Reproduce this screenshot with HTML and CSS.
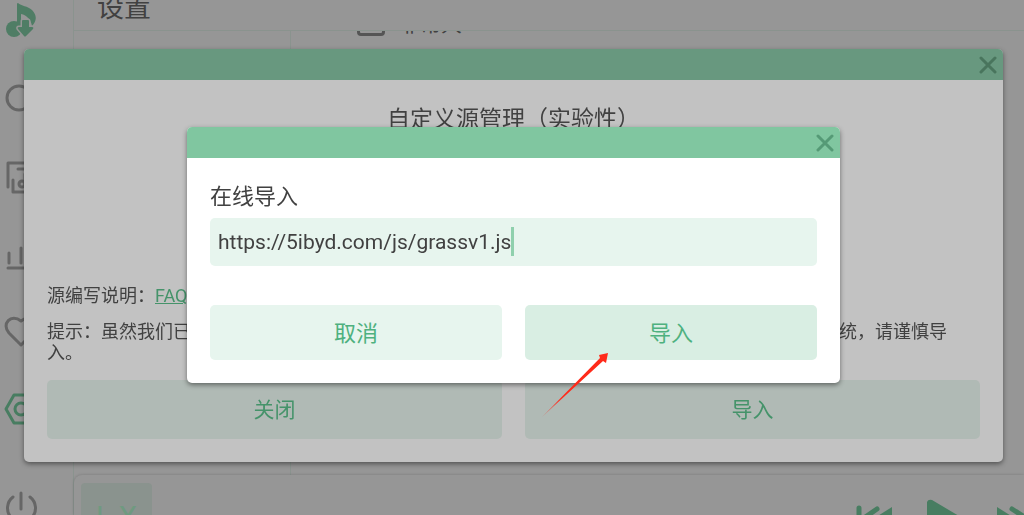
FILE: index.html
```html
<!DOCTYPE html>
<html lang="zh-CN">
<head>
    <meta charset="UTF-8">
    <meta name="viewport" content="width=device-width, initial-scale=1.0">
    <title>设置</title>
    <link rel="stylesheet" href="styles.css">
</head>
<body>
    <div class="app">
        <nav class="sidebar">
            <svg class="logo" viewBox="0 0 32 34">
                <circle cx="9" cy="26" r="8"/>
                <path d="M12 1q0-1 1-1c3 3 10 3 14 7 5 5 5 11 0 16-1-6-5-11-11-12v15h-4z"/>
                <path class="arrow" d="M17 18q0-1 1-1h5q1 0 1 1v6h3q2 0 1 2l-7 7q-1 1-2 0l-6-7q-1-2 1-2h3z"/>
            </svg>
            <svg class="icon" viewBox="0 0 32 32"><circle cx="14" cy="15" r="12"/><path d="M23 24l6 6"/></svg>
            <svg class="icon" viewBox="0 0 32 32"><path d="M3 26V2h25M8 19v12h22V8H13"/><circle cx="17" cy="23" r="3"/><path d="M20 23V13"/></svg>
            <svg class="icon" viewBox="0 0 32 32"><path d="M3 29h27M4 14v10M16 9v15M27 4v20"/></svg>
            <svg class="icon" viewBox="0 0 32 32"><path d="M16 28L4 16C-4 7 6-4 16 4c10-8 20 3 12 12z"/></svg>
            <svg class="icon active" viewBox="0 0 32 32"><path d="M9 0h15l8 14-8 14H9L1 14z"/><circle cx="16" cy="14" r="6"/></svg>
            <svg class="icon power" viewBox="0 0 32 32"><path d="M16 2v16M8 6a14 14 0 1 0 17 0"/></svg>
        </nav>
        <main class="main">
            <header class="title-bar">设置</header>
            <div class="settings">
                <div class="settings-menu"></div>
                <div class="settings-list">
                    <label class="option"><input type="checkbox">非常大</label>
                </div>
            </div>
            <footer class="player">
                <div class="cover">L X</div>
                <div class="controls">
                    <button type="button" aria-label="上一首"><svg width="40" height="28" viewBox="0 0 40 28"><path class="line" d="M4 3v22M22 4L9 13l13 11"/><path d="M37 2v24L18 14z"/></svg></button>
                    <button type="button" aria-label="播放"><svg width="40" height="40" viewBox="0 0 40 40"><path d="M2 3q1-3 5-2l27 16q4 3 0 6L7 39q-4 1-5-2z"/></svg></button>
                    <button type="button" aria-label="下一首"><svg width="40" height="28" viewBox="0 0 40 28"><path class="line" d="M36 3v22M17 4l14 9-14 11"/><path d="M2 2v24l19-12z"/></svg></button>
                </div>
            </footer>
        </main>
    </div>

    <div class="overlay">
        <section class="dialog source-dialog">
            <header class="dialog-header">
                <button type="button" class="close" aria-label="关闭"><svg width="18" height="18" viewBox="0 0 18 18"><path d="M2 2l14 14M16 2L2 16"/></svg></button>
            </header>
            <div class="dialog-body">
                <h1>自定义源管理（实验性）</h1>
                <p>源编写说明：<a href="#">FAQ</a></p>
                <p>提示：虽然我们已经尽可能隔离了脚本的运行环境，但导入包含恶意行为的脚本仍可能会影响你的系统，请谨慎导入。</p>
                <div class="actions">
                    <button type="button">关闭</button>
                    <button type="button">导入</button>
                </div>
            </div>
        </section>
    </div>

    <div class="overlay front">
        <form class="dialog import-dialog">
            <header class="dialog-header">
                <button type="button" class="close" aria-label="关闭"><svg width="18" height="18" viewBox="0 0 18 18"><path d="M2 2l14 14M16 2L2 16"/></svg></button>
            </header>
            <div class="dialog-body">
                <label for="url">在线导入</label>
                <div class="field">
                    <input type="text" id="url" value="https://5ibyd.com/js/grassv1.js">
                    <span class="caret"></span>
                </div>
                <div class="actions">
                    <button type="button">取消</button>
                    <button type="button" class="pressed">导入
                        <svg class="pointer" width="68" height="66" viewBox="0 0 68 66"><defs><linearGradient id="fade" x1="0" y1="1" x2="1" y2="0"><stop offset="0" stop-color="#ff2a1a" stop-opacity="0.3"/><stop offset="0.3" stop-color="#ff2a1a"/></linearGradient></defs><path fill="url(#fade)" d="M0 65L58 6 57 3 66 1 64 11 61 9z"/></svg>
                    </button>
                </div>
            </div>
        </form>
    </div>
</body>
</html>
```
FILE: styles.css
```css
* {
    box-sizing: border-box;
}

body {
    margin: 0;
    font-family: Roboto, "Noto Sans CJK SC", sans-serif;
    color: #414141;
    background-color: #969696;
    overflow: hidden;
}

button,
input {
    font: inherit;
    color: inherit;
    border: none;
    margin: 0;
    padding: 0;
}

/* Page behind the dialogs */
.app {
    display: flex;
    height: 100vh;
    overflow: hidden;
}

.sidebar {
    display: flex;
    flex-direction: column;
    flex: none;
    gap: 46px;
    width: 74px;
    padding: 3px 5px;
    border-right: 1px solid #8a938e;
}

.logo {
    flex: none;
    width: 32px;
    height: 34px;
    fill: #4f7d65;
}

.logo .arrow {
    stroke: #969696;
    stroke-width: 3;
    paint-order: stroke;
}

.icon {
    flex: none;
    width: 32px;
    height: 32px;
    overflow: visible;
    fill: none;
    stroke: #666;
    stroke-width: 3;
    stroke-linecap: round;
    stroke-linejoin: round;
}

.icon.active {
    stroke: #487d61;
}

.icon.power {
    margin-top: 18px;
}

.main {
    flex: 1;
    display: flex;
    flex-direction: column;
    min-width: 0;
}

.title-bar {
    flex: none;
    height: 31px;
    padding-left: 23px;
    font-size: 27px;
    line-height: 16px;
    border-bottom: 1px solid #8a938e;
}

.settings {
    flex: 1;
    display: flex;
    overflow: hidden;
}

.settings-menu {
    width: 217px;
    border-right: 1px solid #8a938e;
}

.settings-list {
    padding-left: 66px;
}

/* The list is scrolled, the row is cut by the title bar */
.option {
    display: flex;
    gap: 14px;
    margin-top: -23px;
    font-size: 21px;
    line-height: 32px;
}

.option input {
    appearance: none;
    width: 28px;
    height: 28px;
    border: 3px solid #555;
    border-radius: 4px;
}

.player {
    flex: none;
    display: flex;
    justify-content: space-between;
    height: 40px;
    padding: 8px 0 0 7px;
    border-radius: 8px 0 0 0;
    background-color: #969696;
    box-shadow: 0 0 3px rgba(0, 0, 0, 0.2);
    overflow: hidden;
}

.cover {
    width: 71px;
    height: 71px;
    border-radius: 4px;
    background-color: #8a938e;
    color: #6f9a80;
    font-size: 29px;
    line-height: 69px;
    text-align: center;
}

.controls {
    display: flex;
    align-items: center;
    gap: 30px;
    height: 71px;
    margin-right: -11px;
}

.controls button {
    height: 40px;
    background: none;
}

.controls svg {
    display: block;
    margin: auto;
    fill: #487d61;
}

.controls .line {
    fill: none;
    stroke: #487d61;
    stroke-width: 5;
    stroke-linecap: round;
}

/* Dialogs */
.overlay {
    position: fixed;
    inset: 0;
    display: flex;
    justify-content: center;
    padding: 49px 21px 53px 24px;
}

.overlay.front {
    align-items: center;
    padding-bottom: 54px;
}

.dialog {
    display: flex;
    flex-direction: column;
    width: 100%;
    border-radius: 5px;
    box-shadow: 0 2px 5px rgba(0, 0, 0, 0.45);
}

.dialog-header {
    flex: none;
    display: flex;
    justify-content: flex-end;
    align-items: center;
    height: 31px;
    padding-right: 6px;
    border-radius: 5px 5px 0 0;
}

.close {
    width: 18px;
    height: 18px;
    background: none;
}

.close svg {
    display: block;
    fill: none;
    stroke-width: 3;
    stroke-linecap: round;
}

.dialog-body {
    flex: 1;
    display: flex;
    flex-direction: column;
    padding: 23px;
}

.actions {
    display: flex;
    gap: 23px;
}

.actions button {
    flex: 1;
    padding-bottom: 3px;
    border-radius: 5px;
}

.source-dialog {
    background-color: #c2c2c2;
}

.source-dialog .dialog-header {
    background-color: #68987f;
}

.source-dialog .close {
    stroke: #49755d;
}

.source-dialog h1 {
    margin: 0 0 auto;
    font-size: 23px;
    font-weight: 400;
    line-height: 34px;
    text-align: center;
}

.source-dialog p {
    margin: 0 0 15px;
    font-size: 18px;
    line-height: 21px;
}

.source-dialog .actions {
    margin-top: 2px;
}

.source-dialog a {
    color: #45936a;
}

.source-dialog .actions button {
    height: 59px;
    font-size: 21px;
    color: #45936a;
    background-color: #b0bab5;
}

.import-dialog {
    width: 653px;
    background-color: #fff;
}

.import-dialog .dialog-header {
    background-color: #80c6a0;
}

.import-dialog .close {
    stroke: #559a76;
}

.import-dialog label {
    margin-bottom: 6px;
    font-size: 22px;
    line-height: 31px;
}

.field {
    position: relative;
    margin-bottom: 39px;
}

.field input {
    display: block;
    width: 100%;
    height: 48px;
    padding: 0 8px;
    border-radius: 5px;
    font-size: 21px;
    background-color: #e7f5ee;
}

.caret {
    position: absolute;
    left: 301px;
    top: 9px;
    width: 3px;
    height: 29px;
    background-color: #8fd0ad;
}

.import-dialog .actions button {
    position: relative;
    height: 55px;
    font-size: 22px;
    color: #4eb17f;
    background-color: #e7f5ee;
}

.import-dialog .actions .pressed {
    background-color: #d9eee3;
}

.pointer {
    position: absolute;
    left: 17px;
    top: 47px;
}
```
